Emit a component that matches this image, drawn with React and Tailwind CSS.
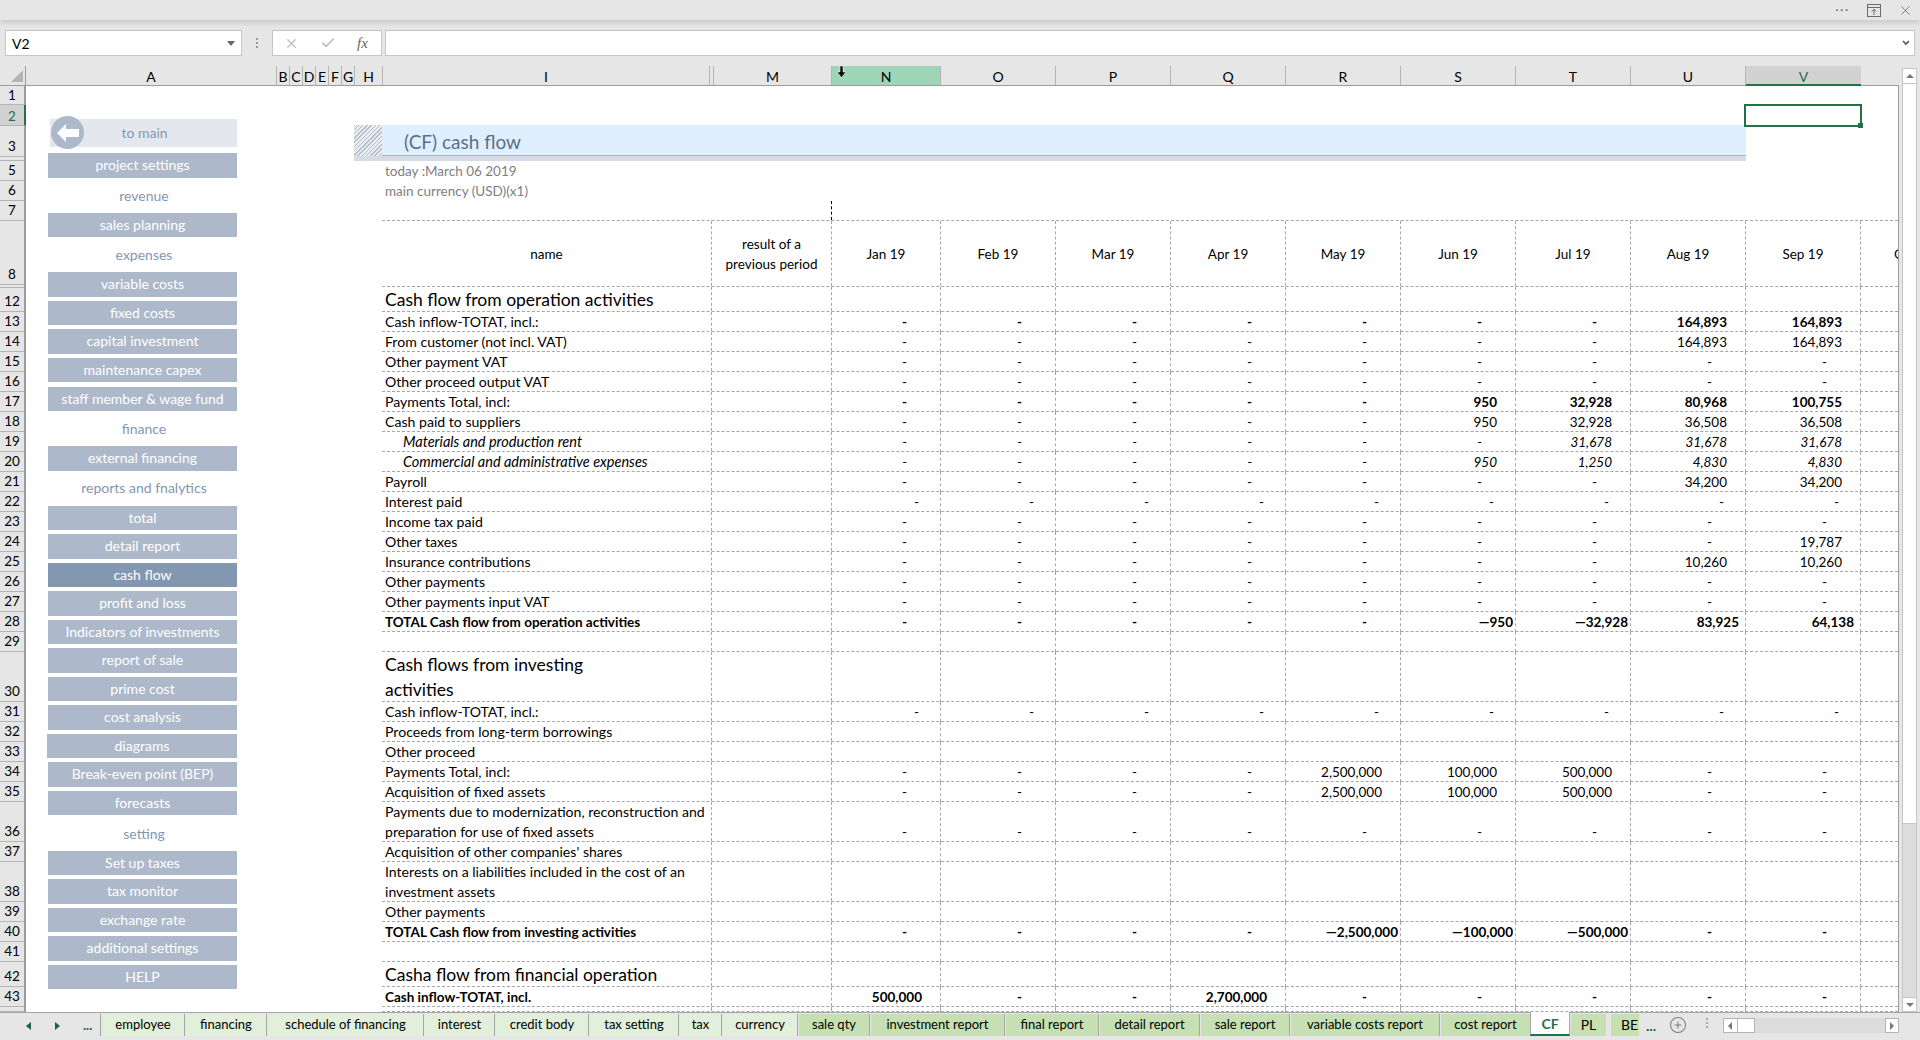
import { Check, CirclePlus, X } from 'lucide-react';

const colHeads = [
  { t: 'A', c: 'w-[251px]' },
  { t: 'B', c: 'w-[13px]' },
  { t: 'C', c: 'w-[13px]' },
  { t: 'D', c: 'w-[13px]' },
  { t: 'E', c: 'w-[13px]' },
  { t: 'F', c: 'w-[13px]' },
  { t: 'G', c: 'w-[13px]' },
  { t: 'H', c: 'w-[28px]' },
  { t: 'I', c: 'w-[327px]' },
  { t: '', c: 'w-[4px]' },
  { t: 'M', c: 'w-[118px]' },
  { t: 'N', c: 'w-[109px] bg-[#9fd5b7]' },
  { t: 'O', c: 'w-[115px]' },
  { t: 'P', c: 'w-[115px]' },
  { t: 'Q', c: 'w-[115px]' },
  { t: 'R', c: 'w-[115px]' },
  { t: 'S', c: 'w-[115px]' },
  { t: 'T', c: 'w-[115px]' },
  { t: 'U', c: 'w-[115px]' },
  { t: 'V', c: 'w-[115px] bg-[#d2d2d2] text-[#217346] !border-b-2 !border-b-[#217346] !border-r-0' },
];

const rowHeads = [
  ['1', 'h-[19px]'], ['2', 'h-[21px]'], ['3', 'h-[31px]'], ['', 'h-[4px]'], ['5', 'h-[20px]'], ['6', 'h-[20px]'], ['7', 'h-[20px]'],
  ['8', 'h-[64px]'], ['', 'h-[3px]'], ['12', 'h-[24px]'], ['13', 'h-[20px]'], ['14', 'h-[20px]'], ['15', 'h-[20px]'], ['16', 'h-[20px]'],
  ['17', 'h-[20px]'], ['18', 'h-[20px]'], ['19', 'h-[20px]'], ['20', 'h-[20px]'], ['21', 'h-[20px]'], ['22', 'h-[20px]'], ['23', 'h-[20px]'],
  ['24', 'h-[20px]'], ['25', 'h-[20px]'], ['26', 'h-[20px]'], ['27', 'h-[20px]'], ['28', 'h-[20px]'], ['29', 'h-[20px]'], ['30', 'h-[50px]'],
  ['31', 'h-[20px]'], ['32', 'h-[20px]'], ['33', 'h-[20px]'], ['34', 'h-[20px]'], ['35', 'h-[20px]'], ['36', 'h-[40px]'], ['37', 'h-[20px]'],
  ['38', 'h-[40px]'], ['39', 'h-[20px]'], ['40', 'h-[20px]'], ['41', 'h-[20px]'], ['42', 'h-[25px]'], ['43', 'h-[20px]'], ['', 'h-[5px]'],
];

const nav = [
  { t: 'project settings', c: 'h-[25px] mt-[2px]' },
  { t: 'revenue', label: true, c: 'h-[27px]' },
  { t: 'sales planning', c: 'h-[24px]' },
  { t: 'expenses', label: true, c: 'h-[27px]' },
  { t: 'variable costs', c: 'h-[25px]' },
  { t: 'fixed costs', c: 'h-[24px]' },
  { t: 'capital investment', c: 'h-[25px]' },
  { t: 'maintenance capex', c: 'h-[24px]' },
  { t: 'staff member & wage fund', c: 'h-[24px] mt-px' },
  { t: 'finance', label: true, c: 'h-[27px]' },
  { t: 'external financing', c: 'h-[25px]' },
  { t: 'reports and fnalytics', label: true, c: 'h-[27px] pb-[2px]' },
  { t: 'total', c: 'h-[24px]' },
  { t: 'detail report', c: 'h-[25px]' },
  { t: 'cash flow', c: 'h-[24px] !bg-[#8497b0]' },
  { t: 'profit and loss', c: 'h-[25px]' },
  { t: 'Indicators of investments', c: 'h-[24px]' },
  { t: 'report of sale', c: 'h-[25px]' },
  { t: 'prime cost', c: 'h-[24px]' },
  { t: 'cost analysis', c: 'h-[25px]' },
  { t: 'diagrams', c: 'h-[24px] -ml-px' },
  { t: 'Break-even point (BEP)', c: 'h-[25px]' },
  { t: 'forecasts', c: 'h-[24px]' },
  { t: 'setting', label: true, c: 'h-[28px]' },
  { t: 'Set up taxes', c: 'h-[24px]' },
  { t: 'tax monitor', c: 'h-[25px]' },
  { t: 'exchange rate', c: 'h-[24px]' },
  { t: 'additional settings', c: 'h-[25px]' },
  { t: 'HELP', c: 'h-[24px]' },
];

const colW = ['w-[109px]', 'w-[115px]', 'w-[115px]', 'w-[115px]', 'w-[115px]', 'w-[115px]', 'w-[115px]', 'w-[115px]', 'w-[115px]', 'w-[115px]'];
const months = ['Jan 19', 'Feb 19', 'Mar 19', 'Apr 19', 'May 19', 'Jun 19', 'Jul 19', 'Aug 19', 'Sep 19'];
const dashes = ['-', '-', '-', '-', '-', '-', '-', '-', '-'];
const empty = ['', '', '', '', '', '', '', '', ''];
const invest = ['-', '-', '-', '-', '2,500,000', '100,000', '500,000', '-', '-'];

const rows = [
  { name: 'Cash flow from operation activities', big: true, h: 'h-[25px]', v: empty },
  { name: 'Cash inflow-TOTAT, incl.:', valBold: true, v: ['-', '-', '-', '-', '-', '-', '-', '164,893', '164,893'] },
  { name: 'From customer (not incl. VAT)', v: ['-', '-', '-', '-', '-', '-', '-', '164,893', '164,893'] },
  { name: 'Other payment VAT', v: dashes },
  { name: 'Other proceed output VAT', v: dashes },
  { name: 'Payments Total, incl:', valBold: true, v: ['-', '-', '-', '-', '-', '950', '32,928', '80,968', '100,755'] },
  { name: 'Cash paid to suppliers', v: ['-', '-', '-', '-', '-', '950', '32,928', '36,508', '36,508'] },
  { name: 'Materials and production rent', italic: true, v: ['-', '-', '-', '-', '-', '-', '31,678', '31,678', '31,678'] },
  { name: 'Commercial and administrative expenses', italic: true, v: ['-', '-', '-', '-', '-', '950', '1,250', '4,830', '4,830'] },
  { name: 'Payroll', v: ['-', '-', '-', '-', '-', '-', '-', '34,200', '34,200'] },
  { name: 'Interest paid', shift: true, v: dashes },
  { name: 'Income tax paid', v: dashes },
  { name: 'Other taxes', v: ['-', '-', '-', '-', '-', '-', '-', '-', '19,787'] },
  { name: 'Insurance contributions', v: ['-', '-', '-', '-', '-', '-', '-', '10,260', '10,260'] },
  { name: 'Other payments', v: dashes },
  { name: 'Other payments input VAT', v: dashes },
  { name: 'TOTAL Cash flow from operation activities', bold: true, tight: true, v: ['-', '-', '-', '-', '-', '—950', '—32,928', '83,925', '64,138'] },
  { name: '', v: empty },
  { name: 'Cash flows from investing\nactivities', big: true, h: 'h-[50px]', v: empty },
  { name: 'Cash inflow-TOTAT, incl.:', shift: true, v: dashes },
  { name: 'Proceeds from long-term borrowings', v: empty },
  { name: 'Other proceed', v: empty },
  { name: 'Payments Total, incl:', v: invest },
  { name: 'Acquisition of fixed assets', v: invest },
  { name: 'Payments due to modernization, reconstruction and preparation for use of fixed assets', h: 'h-[40px]', v: dashes },
  { name: "Acquisition of other companies' shares", v: empty },
  { name: 'Interests on a liabilities included in the cost of an investment assets', h: 'h-[40px]', v: empty },
  { name: 'Other payments', v: empty },
  { name: 'TOTAL Cash flow from investing activities', bold: true, v: ['-', '-', '-', '-', '—2,500,000', '—100,000', '—500,000', '-', '-'] },
  { name: '', v: empty },
  { name: 'Casha flow from financial operation', big: true, h: 'h-[25px]', v: empty },
  { name: 'Cash inflow-TOTAT, incl.', bold: true, v: ['500,000', '-', '-', '2,700,000', '-', '-', '-', '-', '-'] },
  { name: '', h: 'h-[5px]', v: empty },
];

const tabs = [
  { t: 'employee', c: 'w-[82px] bg-[#e2efda]' },
  { t: 'financing', c: 'w-[80px] bg-[#e2efda]' },
  { t: 'schedule of financing', c: 'w-[155px] bg-[#e2efda]' },
  { t: 'interest', c: 'w-[69px] bg-[#e2efda]' },
  { t: 'credit body', c: 'w-[92px] bg-[#e2efda]' },
  { t: 'tax setting', c: 'w-[88px] bg-[#e2efda]' },
  { t: 'tax', c: 'w-[41px] bg-[#e2efda]' },
  { t: 'currency', c: 'w-[74px] bg-[#e2efda]' },
  { t: 'sale qty', c: 'w-[70px] bg-[#c6e0b4]' },
  { t: 'investment report', c: 'w-[133px] bg-[#c6e0b4]' },
  { t: 'final report', c: 'w-[92px] bg-[#c6e0b4]' },
  { t: 'detail report', c: 'w-[99px] bg-[#c6e0b4]' },
  { t: 'sale report', c: 'w-[88px] bg-[#c6e0b4]' },
  { t: 'variable costs report', c: 'w-[148px] bg-[#c6e0b4]' },
  { t: 'cost report', c: 'w-[89px] bg-[#c6e0b4]' },
];

function Cell({ value, row, width }) {
  let pad = 'pr-[18px]';
  if (value === '-') pad = row.shift ? 'pr-[21px]' : 'pr-[33px]';
  else if (value.startsWith('—')) pad = 'pr-[2px]';
  else if (row.tight) pad = 'pr-[6px]';
  return (
    <div className={`${width} shrink-0 -mb-px flex items-end justify-end border-r border-dashed border-[#a6a6a6] ${pad} ${row.bold || row.valBold ? 'font-bold' : ''} ${row.italic ? 'italic' : ''}`}>
      {value}
    </div>
  );
}

function SheetRow({ row }) {
  let nameCls = 'px-[3px] text-[14.1px]';
  if (row.big) nameCls = 'px-[3px] text-[17.5px] leading-[25px] whitespace-pre-line';
  if (row.bold) nameCls = 'px-[3px] text-[13.5px] font-bold';
  if (row.italic) nameCls = 'pl-[21px] pr-[3px] text-[14.5px] italic';
  return (
    <div className={`flex ${row.h || 'h-[20px]'} border-b border-dashed border-[#a6a6a6] leading-[20px]`}>
      <div className={`w-[330px] shrink-0 overflow-hidden border-r border-dashed border-[#a6a6a6] ${nameCls}`}>{row.name}</div>
      <div className="w-[120px] shrink-0 border-r border-dashed border-[#a6a6a6]" />
      {row.v.map((v, i) => <Cell key={i} value={v} row={row} width={colW[i]} />)}
      <div className="w-[115px] shrink-0" />
    </div>
  );
}

export default function App() {
  return (
    <div className="w-[1920px] h-[1040px] overflow-hidden flex flex-col bg-[#e6e6e6] text-[13.5px] text-black font-['Lato','Liberation_Sans',sans-serif]">
      {/* window strip */}
      <div className="h-[20px] shrink-0 flex items-center justify-end gap-[17px] pr-[7px] shadow-[0_3px_5px_rgba(0,0,0,0.12)]">
        <span className="text-[#6b6b6b] text-[12px] font-bold tracking-[2px] leading-none -mt-[6px]">...</span>
        <svg width="14" height="13" viewBox="0 0 14 13" fill="none" stroke="#6b6b6b">
          <rect x="0.5" y="0.5" width="13" height="12" />
          <path d="M0.500 3.500H13.500M7 11V5.500M4.800 7.500 7 5.300l2.200 2.200" />
        </svg>
        <X size={15} strokeWidth={1.1} className="text-[#555]" />
      </div>

      {/* formula bar */}
      <div className="h-[46px] shrink-0 flex items-start pt-[10px]">
        <div className="ml-[5px] w-[237px] h-[26px] flex items-center justify-between bg-white border border-[#c6c6c6] pl-[6px] pr-[6px] text-[14px]">
          V2
          <span className="w-0 h-0 border-x-[4px] border-x-transparent border-t-[5px] border-t-[#666]" />
        </div>
        <div className="w-[30px] h-[26px] flex flex-col items-center justify-center gap-[2px]">
          <span className="w-[2px] h-[2px] bg-[#999]" />
          <span className="w-[2px] h-[2px] bg-[#999]" />
          <span className="w-[2px] h-[2px] bg-[#999]" />
        </div>
        <div className="w-[110px] h-[26px] flex items-center bg-white border border-[#c6c6c6] pl-[11px] text-[#bdbdbd]">
          <X size={15} strokeWidth={2} />
          <Check size={16} strokeWidth={2.4} className="ml-[21px]" />
          <span className="ml-[21px] text-[#666] text-[15px] italic font-['Liberation_Serif',serif]">fx</span>
        </div>
        <div className="ml-[3px] w-[1530px] h-[26px] flex items-center justify-end bg-white border border-[#c6c6c6] pr-[4px]">
          <svg width="8" height="6" viewBox="0 0 8 6" fill="none" stroke="#555" strokeWidth="1.6">
            <path d="M1 1 4 4l3-3" />
          </svg>
        </div>
      </div>

      {/* column letters */}
      <div className="h-[20px] shrink-0 flex leading-[22px] text-[14px]">
        <div className="w-[26px] shrink-0 flex items-end justify-end pr-[2px] pb-[3px] border-b border-r border-[#9c9c9c]">
          <span className="w-0 h-0 border-l-[12px] border-l-transparent border-b-[12px] border-b-[#b5b5b5]" />
        </div>
        {colHeads.map((c, i) => (
          <div key={i} className={`relative shrink-0 text-center border-r border-b border-r-[#b5b5b5] border-b-[#9c9c9c] ${c.c}`}>
            {c.t}
            {c.t === 'N' && (
              <svg className="absolute left-[5px] top-0" width="9" height="12" viewBox="0 0 9 12">
                <path d="M3 0h3v6h3l-4.500 5.500L0 6h3z" fill="#000" stroke="#fff" strokeWidth="0.6" />
              </svg>
            )}
          </div>
        ))}
        <div className="flex-1 border-b border-[#9c9c9c] mr-[21px]" />
      </div>

      {/* sheet */}
      <div className="h-[926px] shrink-0 flex">
        <div className="w-[26px] shrink-0 flex flex-col border-r-2 border-[#9c9c9c]">
          {rowHeads.map(([t, h], i) => (
            <div
              key={i}
              className={`${h} shrink-0 flex items-end justify-center overflow-hidden border-b border-[#b5b5b5] ${t === '1' || t === '2' ? 'leading-[17px]' : 'leading-[20px]'} ${t === '2' ? 'bg-[#d2d2d2] text-[#217346] border-r-2 border-r-[#217346] -mr-[2px]' : ''}`}
            >
              {t}
            </div>
          ))}
        </div>

        <div className="relative w-[1873px] shrink-0 flex bg-white border-r border-[#9c9c9c] overflow-hidden">
          {/* nav shapes */}
          <div className="w-[328px] shrink-0 pt-[33px] pl-[22px] pr-[117px] flex flex-col gap-1 text-[14px]">
            <div className="relative ml-[2px] h-[28px] flex items-center justify-center pl-[2px] pb-[2px] bg-[#e4e8ee] text-[#8497b0]">
              <div className="absolute left-[1px] -top-[3px] w-[33px] h-[33px] flex items-center justify-center rounded-full bg-[#adb9ca]">
                <svg width="22" height="18" viewBox="0 0 22 18">
                  <path d="M0 9 9 0v5h13v8H9v5z" fill="#fff" />
                </svg>
              </div>
              to main
            </div>
            {nav.map((n) => (
              <div
                key={n.t}
                className={n.label
                  ? `flex items-center justify-center pl-[3px] text-[#8497b0] ${n.c}`
                  : `flex items-center justify-center pb-[2px] bg-[#adb9ca] text-white ${n.c}`}
              >
                {n.t}
              </div>
            ))}
          </div>

          {/* report */}
          <div className="flex-1 min-w-0 pt-[39px] overflow-hidden">
            <div className="w-[1392px] h-[36px] flex flex-col bg-[#d6dce4]">
              <div className="h-[31px] flex">
                <div className="w-[28px] bg-[repeating-linear-gradient(135deg,#b4bdcb_0,#b4bdcb_1px,#e9ecf1_1px,#e9ecf1_3px)]" />
                <div className="flex-1 flex items-center bg-[#dfeffd] border-b border-[#a9b8cc] pl-[22px] pt-[5px] text-[19px] text-[#5b6f8c]">
                  (CF) cash flow
                </div>
              </div>
            </div>
            <div className="h-[20px] pl-[31px] leading-[20px] text-[#808080]">today :March 06 2019</div>
            <div className="h-[20px] pl-[31px] leading-[20px] text-[#808080]">main currency (USD)(x1)</div>
            <div className="h-[19px] ml-[477px] border-l border-dashed border-black" />

            <div className="ml-[28px] border-t border-dashed border-[#a6a6a6]">
              <div className="flex h-[66px] border-b border-dashed border-[#a6a6a6] text-center">
                <div className="w-[330px] shrink-0 flex items-center justify-center pt-[2px] border-r border-dashed border-[#a6a6a6]">name</div>
                <div className="w-[120px] shrink-0 flex items-center justify-center leading-[20px] border-r border-dashed border-[#a6a6a6]">
                  result of a<br />previous period
                </div>
                {months.map((m, i) => (
                  <div key={m} className={`${colW[i]} shrink-0 flex items-center justify-center pt-[2px] border-r border-dashed border-[#a6a6a6]`}>{m}</div>
                ))}
                <div className="w-[115px] shrink-0 flex items-center justify-center pt-[2px] pr-[8px]">Oct 19</div>
              </div>
              {rows.map((r, i) => <SheetRow key={i} row={r} />)}
            </div>
          </div>

          {/* active cell */}
          <div className="absolute left-[1718px] top-[18px] w-[118px] h-[23px] border-2 border-[#217346]">
            <span className="absolute -right-[3px] -bottom-[3px] w-[5px] h-[5px] bg-[#217346]" />
          </div>
        </div>

        <div className="ml-[3px] -mt-[18px] h-[944px] w-[15px] shrink-0 flex flex-col bg-[#dcdcdc] border border-[#c6c6c6]">
          <div className="h-[14px] shrink-0 flex items-center justify-center bg-white">
            <span className="w-0 h-0 border-x-[4px] border-x-transparent border-b-[4px] border-b-[#777]" />
          </div>
          <div className="h-[741px] shrink-0 bg-white border-y border-[#c6c6c6]" />
          <div className="flex-1" />
          <div className="h-[14px] shrink-0 flex items-center justify-center bg-white border-t border-[#c6c6c6]">
            <span className="w-0 h-0 border-x-[4px] border-x-transparent border-t-[4px] border-t-[#777]" />
          </div>
        </div>
      </div>

      {/* sheet tabs */}
      <div className="h-[28px] shrink-0 flex items-start border-t border-[#a6a6a6] text-[13px]">
        <div className="w-[100px] h-[25px] shrink-0 flex items-center pl-[26px]">
          <span className="w-0 h-0 border-y-[4px] border-y-transparent border-r-[5px] border-r-[#1f5f3f]" />
          <span className="ml-[24px] w-0 h-0 border-y-[4px] border-y-transparent border-l-[5px] border-l-[#1f5f3f]" />
          <span className="ml-[23px] font-bold leading-none text-[#1f5f3f]">...</span>
        </div>
        {tabs.map((t) => (
          <div key={t.t} className="flex h-[22px] mt-[1px] shrink-0 border-l border-[#a6a6a6]">
            <div className={`${t.c} ml-[1px] pb-px flex items-center justify-center`}>{t.t}</div>
          </div>
        ))}
        <div className="w-[40px] h-[24px] -mt-px shrink-0 flex items-center justify-center bg-white border-x border-[#a6a6a6] border-b-2 border-b-[#217346] text-[14px] font-bold text-[#217346]">CF</div>
        <div className="ml-[1px] w-[35px] h-[22px] mt-[1px] shrink-0 flex items-center justify-center pb-px text-[14px] bg-[#c6e0b4]">PL</div>
        <div className="ml-[5px] w-[28px] h-[22px] mt-[1px] shrink-0 flex items-center pl-[10px] pb-px overflow-hidden text-[14px] bg-[#c6e0b4]">BEP</div>
        <span className="ml-[7px] mt-[2px] text-[14px] font-bold text-[#1f5f3f]">...</span>
        <CirclePlus size={18} strokeWidth={1.4} className="ml-[13px] mt-[3px] text-[#7f7f7f]" />
        <div className="ml-[19px] mt-[5px] flex flex-col gap-[2px]">
          <span className="w-[2px] h-[2px] bg-[#aaa]" />
          <span className="w-[2px] h-[2px] bg-[#aaa]" />
          <span className="w-[2px] h-[2px] bg-[#aaa]" />
        </div>
        <div className="ml-[15px] mt-[5px] w-[176px] h-[15px] flex bg-[#dcdcdc]">
          <div className="w-[15px] h-[15px] flex items-center justify-center bg-white border border-[#b5b5b5]">
            <span className="w-0 h-0 border-y-[4px] border-y-transparent border-r-[4px] border-r-[#777]" />
          </div>
          <div className="w-[17px] h-[15px] bg-white border-y border-r border-[#b5b5b5]" />
          <div className="flex-1" />
          <div className="w-[14px] h-[15px] flex items-center justify-center bg-white border border-[#b5b5b5]">
            <span className="w-0 h-0 border-y-[4px] border-y-transparent border-l-[4px] border-l-[#777]" />
          </div>
        </div>
      </div>
    </div>
  );
}
